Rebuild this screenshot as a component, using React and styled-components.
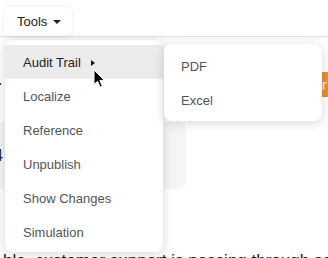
import React from "react";
import styled, { createGlobalStyle } from "styled-components";

const Global = createGlobalStyle`
  html, body { margin: 0; padding: 0; background: #fff; }
  body { font-family: "Liberation Sans", Arial, sans-serif; overflow: hidden; }
  #root { width: 328px; height: 258px; position: relative; overflow: hidden; }
`;

const Header = styled.header`
  height: 36px;
  box-shadow: 0 1px 0 #e2e2e2, 0 2px 4px rgba(0, 0, 0, 0.06);
  display: flex;
  align-items: flex-end;
  padding-left: 4px;
  position: relative;
  z-index: 1;
`;

const ToolsButton = styled.button`
  height: 29px;
  width: 68px;
  border: none;
  background: #fff;
  border-radius: 6px;
  box-shadow: 0 0 4px rgba(0, 0, 0, 0.09);
  font-family: inherit;
  font-size: 13px;
  color: #222;
  display: flex;
  align-items: center;
  gap: 6px;
  padding: 0 0 0 13px;
  position: relative;
  top: 0;
`;

const Caret = styled.span`
  width: 0;
  height: 0;
  border-left: 4px solid transparent;
  border-right: 4px solid transparent;
  border-top: 4px solid #222;
  margin-top: 1px;
`;

const Main = styled.main`
  display: flex;
  flex-direction: column;
  padding-top: 36px;
`;

const Row = styled.div`
  height: 25px;
  display: flex;
  align-items: center;
  justify-content: space-between;
  font-size: 16px;
  color: #111;
`;

const Fragment = styled.span`
  margin-left: -2px;
  margin-top: -10px;
`;

const Badge = styled.span`
  background: #ef8f2a;
  color: #fff;
  height: 25px;
  width: 10px;
  margin-right: -4px;
  display: flex;
  align-items: center;
  padding-left: 2px;
  font-size: 14px;
`;

const Card = styled.div`
  margin-top: 25px;
  margin-left: -20px;
  width: 206px;
  height: 67px;
  background: #f5f5f5;
  border-radius: 8px;
  display: flex;
  align-items: center;
  font-size: 16px;
  color: #222;
  padding-left: 14px;
  box-sizing: border-box;
`;

const Paragraph = styled.p`
  margin: 60px 0 0 3px;
  font-size: 17px;
  line-height: 24px;
  color: #1a1a1a;
  white-space: nowrap;
`;

const Menu = styled.ul`
  position: absolute;
  list-style: none;
  margin: 0;
  left: ${(p) => p.$left}px;
  top: ${(p) => p.$top}px;
  width: 158px;
  padding: 5px 0 ${(p) => p.$padBottom}px;
  background: #fff;
  border-radius: 8px;
  box-shadow: 0 2px 12px rgba(0, 0, 0, 0.16);
  z-index: 5;
`;

const Item = styled.li`
  height: 34px;
  display: flex;
  align-items: center;
  padding-left: ${(p) => p.$indent}px;
  font-size: 13px;
  color: ${(p) => (p.$active ? "#222" : "#555")};
  background: ${(p) => (p.$active ? "#ebebeb" : "transparent")};
`;

const SubArrow = styled.span`
  width: 0;
  height: 0;
  border-top: 3.5px solid transparent;
  border-bottom: 3.5px solid transparent;
  border-left: 4px solid #111;
  margin-left: 10px;
  margin-top: 1px;
`;

const Cursor = styled.svg`
  position: absolute;
  left: 93px;
  top: 69px;
  z-index: 10;
`;

const items = ["Audit Trail", "Localize", "Reference", "Unpublish", "Show Changes", "Simulation"];

export default function App() {
  return (
    <>
      <Global />
      <Header>
        <ToolsButton>
          Tools <Caret />
        </ToolsButton>
      </Header>
      <Main>
        <Row>
          <Fragment>.</Fragment>
          <Badge>r</Badge>
        </Row>
        <Card>
          <span>4</span>
        </Card>
        <Paragraph>ble, customer support is passing through some</Paragraph>
      </Main>
      <Menu $left={5} $top={40} $padBottom={3}>
        {items.map((t, i) => (
          <Item key={t} $indent={18} $active={i === 0}>
            {t}
            {i === 0 && <SubArrow />}
          </Item>
        ))}
      </Menu>
      <Menu $left={164} $top={44} $padBottom={4}>
        <Item $indent={17}>PDF</Item>
        <Item $indent={17}>Excel</Item>
      </Menu>
      <Cursor width="14" height="20" viewBox="0 0 14 20">
        <path d="M1 1 L1 15.5 L4.5 12.3 L7.2 18.2 L9.4 17.2 L6.8 11.4 L11.4 11.4 Z" fill="#000" stroke="#fff" strokeWidth="1" strokeLinejoin="round" />
      </Cursor>
    </>
  );
}
